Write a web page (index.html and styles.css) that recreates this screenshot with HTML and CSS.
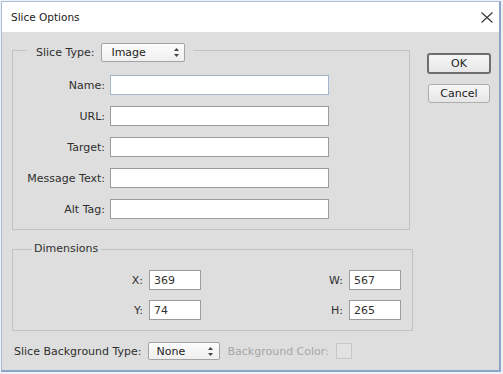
FILE: index.html
```html
<!DOCTYPE html>
<html lang="en">
<head>
  <meta charset="UTF-8" />
  <title>Slice Options</title>
  <link rel="stylesheet" href="styles.css">
</head>
<body>
  <div class="window">
    <div class="titlebar">
      <span class="title">Slice Options</span>
      <svg class="close" width="12" height="11" viewBox="0 0 12 11">
        <path d="M0.5 0.5 L11.5 10.5 M11.5 0.5 L0.5 10.5" stroke="#333" stroke-width="1.1" fill="none" />
      </svg>
    </div>
    <div class="content">
      <div class="main">
        <fieldset class="group group-slice">
          <legend class="slice-legend">
            <span class="legend-label">Slice Type:</span>
            <div class="select select-type">
              <span>Image</span>
              <svg width="5" height="9" viewBox="0 0 5 9"><path d="M2.5 0 L5 3 L0 3 Z M0 6 L5 6 L2.5 9 Z" fill="#444" /></svg>
            </div>
          </legend>
          <div class="fields">
            <label class="field-label" for="name">Name:</label>
            <input class="input input-wide input-focus" id="name" type="text" />
            <label class="field-label" for="url">URL:</label>
            <input class="input input-wide" id="url" type="text" />
            <label class="field-label" for="target">Target:</label>
            <input class="input input-wide" id="target" type="text" />
            <label class="field-label" for="message">Message Text:</label>
            <input class="input input-wide" id="message" type="text" />
            <label class="field-label" for="alt">Alt Tag:</label>
            <input class="input input-wide" id="alt" type="text" />
          </div>
        </fieldset>

        <fieldset class="group group-dims">
          <legend class="dims-legend">Dimensions</legend>
          <div class="dims">
            <div class="dim"><label for="dimX">X:</label><input class="input input-small" id="dimX" type="text" value="369" /></div>
            <div class="dim"><label for="dimW">W:</label><input class="input input-small" id="dimW" type="text" value="567" /></div>
            <div class="dim"><label for="dimY">Y:</label><input class="input input-small" id="dimY" type="text" value="74" /></div>
            <div class="dim"><label for="dimH">H:</label><input class="input input-small" id="dimH" type="text" value="265" /></div>
          </div>
        </fieldset>

        <div class="bg-row">
          <span>Slice Background Type:</span>
          <div class="select select-bg">
            <span>None</span>
            <svg width="5" height="9" viewBox="0 0 5 9"><path d="M2.5 0 L5 3 L0 3 Z M0 6 L5 6 L2.5 9 Z" fill="#444" /></svg>
          </div>
          <span class="disabled-label">Background Color:</span>
          <div class="swatch"></div>
        </div>
      </div>

      <div class="buttons">
        <button class="btn btn-ok" type="button">OK</button>
        <button class="btn btn-cancel" type="button">Cancel</button>
      </div>
    </div>
  </div>
</body>
</html>
```

FILE: styles.css
```css
body {
  margin: 0;
  background-color: #eef2f6;
  font-family: "DejaVu Sans", sans-serif;
  font-size: 11px;
  color: #2e2e2e;
}
.window {
  box-sizing: border-box;
  width: 500px;
  height: 371px;
  margin: 1px 0 0 1px;
  border: 1px solid #a8bcd4;
  border-right: 2px solid #89a6c8;
  border-bottom: 2px solid #89a6c8;
  background-color: #dedede;
  display: flex;
  flex-direction: column;
}
.titlebar {
  height: 30px;
  flex-shrink: 0;
  background-color: #fff;
  display: flex;
  align-items: center;
  justify-content: space-between;
  padding: 0 6px 0 9px;
}
.title {
  font-size: 10.5px;
  color: #222;
}
.content {
  display: flex;
  padding: 11px 0 0 10px;
}
.main {
  width: 401px;
}
.group {
  box-sizing: border-box;
  margin: 0;
  padding: 0;
  border: 1px solid #c2c2c2;
}
.group-slice {
  width: 398px;
}
.group-dims {
  width: 401px;
  margin-top: 12px;
}
.slice-legend {
  display: flex;
  align-items: flex-start;
  gap: 7px;
  height: 15px;
  margin-left: 14px;
  padding: 0 8px 0 9px;
}
.legend-label {
  line-height: 19px;
}
.select {
  box-sizing: border-box;
  display: flex;
  align-items: center;
  justify-content: space-between;
  height: 19px;
  border: 1px solid #a3a3a3;
  border-radius: 2px;
  background: linear-gradient(#fdfdfd, #efefef);
  color: #222;
}
.select-type {
  width: 84px;
  padding: 0 5px 0 9px;
}
.select-bg {
  width: 72px;
  height: 18px;
  padding: 0 6px 0 8px;
  margin-left: 6px;
}
.fields {
  display: grid;
  grid-template-columns: 88px 219px;
  column-gap: 5px;
  row-gap: 11px;
  align-items: center;
  padding: 17px 0 10px 4px;
}
.field-label {
  text-align: right;
}
.input {
  box-sizing: border-box;
  height: 20px;
  margin: 0;
  padding: 0 4px;
  border: 1px solid #9c9c9c;
  border-radius: 0;
  background-color: #fff;
  font: inherit;
  color: #333;
  outline: none;
}
.input-wide {
  width: 219px;
}
.input-focus {
  border-color: #a2b6d0;
}
.input-small {
  width: 52px;
}
.dims-legend {
  line-height: 14px;
  margin-left: 19px;
  padding: 0 3px 0 2px;
}
.dims {
  display: grid;
  grid-template-columns: 188px 200px;
  row-gap: 10px;
  padding: 14px 0 10px;
}
.dim {
  display: flex;
  justify-content: flex-end;
  align-items: center;
  gap: 6px;
}
.bg-row {
  display: flex;
  align-items: center;
  margin-top: 11px;
  padding-left: 2px;
}
.disabled-label {
  color: #a6a6a6;
  margin-left: 8px;
}
.swatch {
  box-sizing: border-box;
  width: 16px;
  height: 16px;
  margin-left: 7px;
  border: 1px solid #c8c8c8;
  background-color: #e2e2e2;
}
.buttons {
  display: flex;
  flex-direction: column;
  align-items: flex-start;
  margin-left: 14px;
  padding-top: 10px;
}
.btn {
  box-sizing: border-box;
  margin: 0;
  padding: 0;
  border: 1px solid #adadad;
  border-radius: 3px;
  background: linear-gradient(#f7f7f7, #e6e6e6);
  font: inherit;
  color: #222;
  cursor: pointer;
}
.btn-ok {
  width: 64px;
  height: 21px;
  border: 2px solid #6e6e6e;
}
.btn-cancel {
  width: 62px;
  height: 19px;
  margin: 10px 0 0 1px;
}
```
